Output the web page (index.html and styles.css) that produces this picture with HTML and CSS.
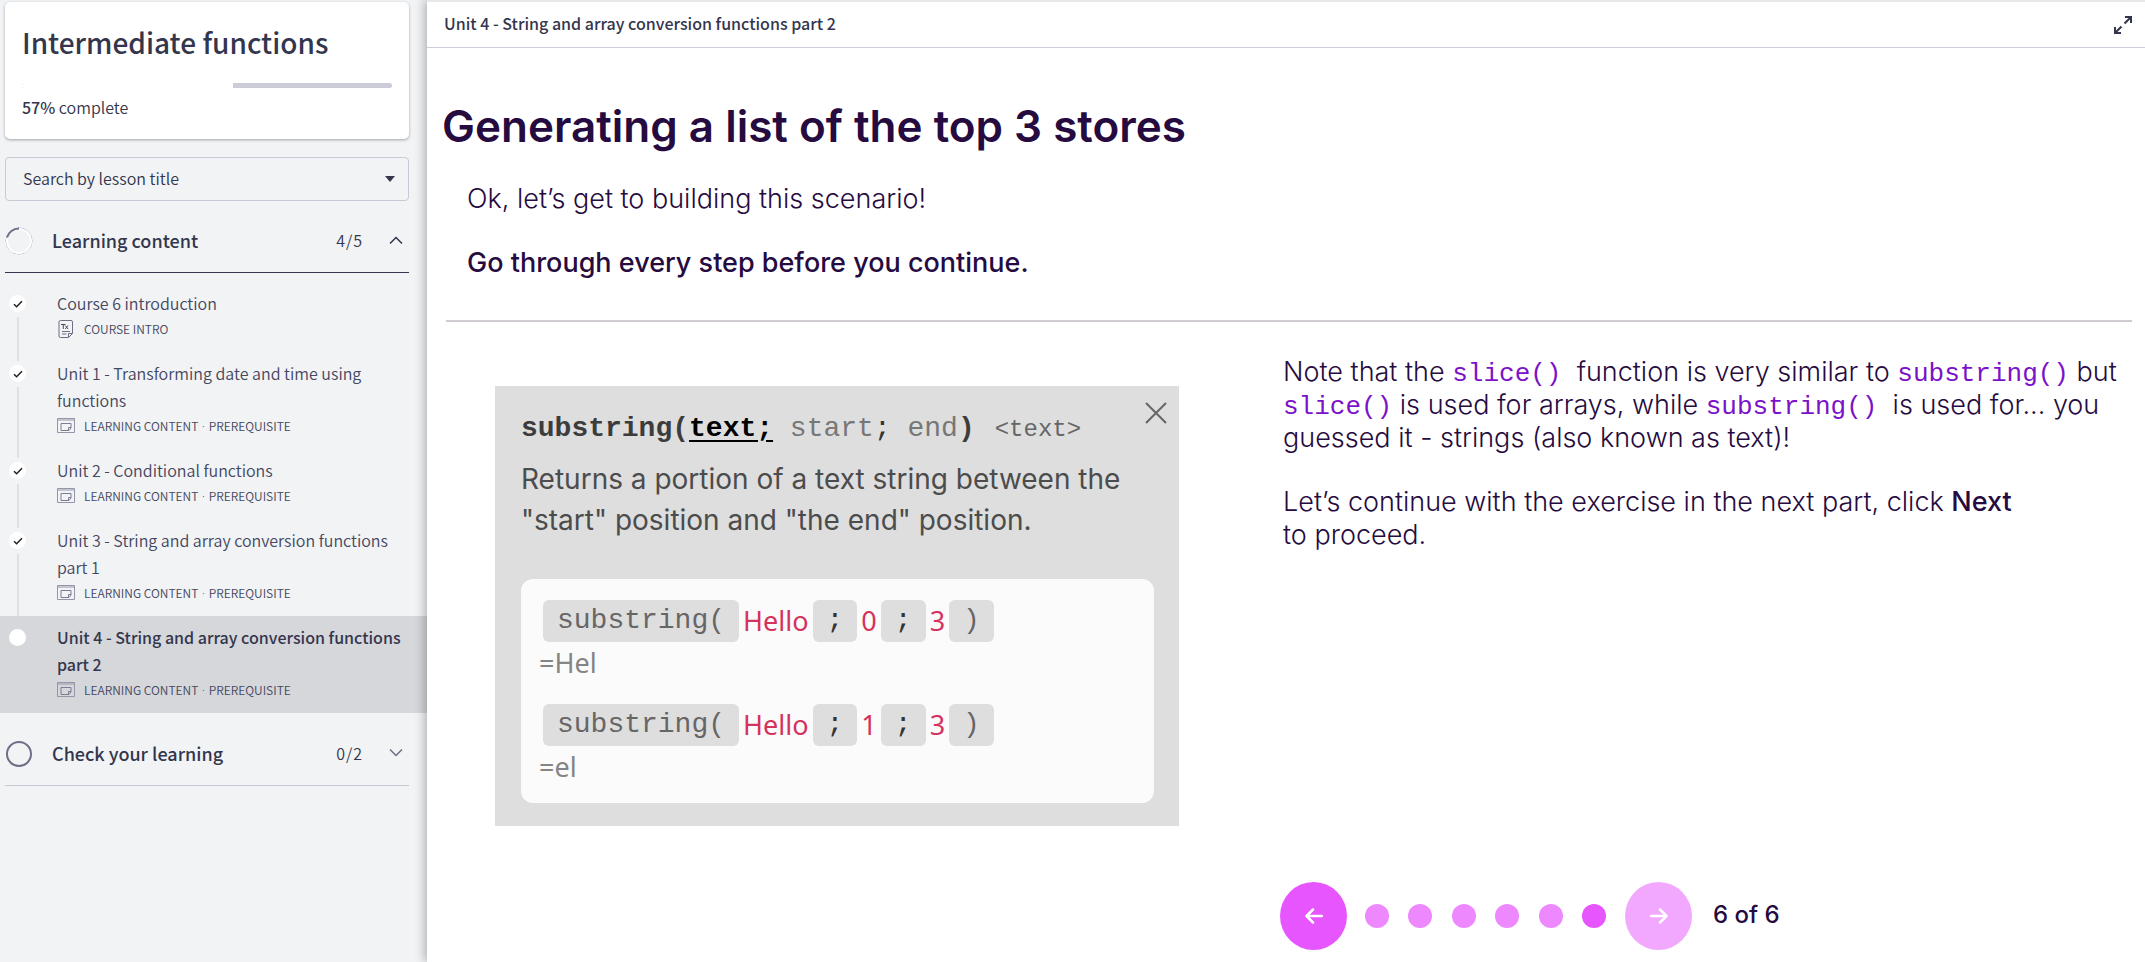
FILE: index.html
```html
<!DOCTYPE html>
<html lang="en">
<head>
<meta charset="utf-8">
<title>Intermediate functions</title>
<link rel="stylesheet" href="styles.css">
</head>
<body>
<svg class="defs" aria-hidden="true">
  <symbol id="check" viewBox="0 0 10 10"><path d="M1 5.2 3.6 7.8 9 2.2" fill="none" stroke="#222" stroke-width="1.5"/></symbol>
  <symbol id="doc" viewBox="0 0 18 18"><path d="M3.500.5h10.500a1.500 1.500 0 0 1 1.500 1.500V13.500l-4 4h-8A1.500 1.500 0 0 1 2 16V2A1.500 1.500 0 0 1 3.500.5zM15.500 13.500h-4v4M5 11.500h8M5 14h4.500" fill="none" stroke="#6c6f86" stroke-width="1"/><path d="M4 4.500h4.500M6.300 4.500v4.500M8.300 5.500l2.700 3.500m0-3.500-2.700 3.500" fill="none" stroke="#4b4d64" stroke-width="1"/></symbol>
  <symbol id="content" viewBox="0 0 18 18"><path d="M.5 1.500h17v14H.5zM.5 3h17" fill="none" stroke="#9395a8" stroke-width="1"/><path d="M4 6.500h10v4.500L12 13.500H4zM14 10.500h-2.500v3" fill="none" stroke="#7b7d92" stroke-width="1"/></symbol>
</svg>
<div class="app">
  <aside class="sidebar">
    <section class="card">
      <h1 class="card-title">Intermediate functions</h1>
      <div class="bar" role="progressbar" aria-label="Course progress" aria-valuenow="57" aria-valuemin="0" aria-valuemax="100"><div class="bar-fill" style="width:57%"></div></div>
      <p class="card-status"><b>57%</b> complete</p>
    </section>
    <div class="search">
      <select class="search-select" aria-label="Search by lesson title"><option>Search by lesson title</option></select>
      <svg class="search-arrow" width="10" height="6" viewBox="0 0 10 6"><path d="M0 0h10L5 6z" fill="#33364d"/></svg>
    </div>
    <button class="section open" type="button" aria-expanded="true">
      <svg width="28" height="28" viewBox="0 0 28 28" fill="none"><circle cx="14" cy="14" r="13" stroke="#a9abb9" stroke-width="1"/><circle cx="14" cy="14" r="12" stroke="#fff" stroke-width="2"/><path d="M2 10.500A12.500 12.500 0 0 1 14 1.500" stroke="#6c6f86" stroke-width="2"/></svg>
      <span class="section-name">Learning content</span>
      <span class="section-count">4/5</span>
      <svg width="14" height="8" viewBox="0 0 14 8"><path d="M1 7.500 7 1.500l6 6" fill="none" stroke="#33364d" stroke-width="1.500"/></svg>
    </button>
    <ol class="lessons">
      <li class="lesson"><span class="mark"><svg width="10" height="10"><use href="#check"/></svg></span><a class="lesson-link" href="#intro"><span class="lesson-title">Course 6 introduction</span><span class="meta"><svg width="18" height="18"><use href="#doc"/></svg><span>COURSE INTRO</span></span></a></li>
      <li class="lesson"><span class="mark"><svg width="10" height="10"><use href="#check"/></svg></span><a class="lesson-link" href="#unit1"><span class="lesson-title">Unit 1 - Transforming date and time using functions</span><span class="meta"><svg width="18" height="18"><use href="#content"/></svg><span>LEARNING CONTENT <span class="bullet">·</span> PREREQUISITE</span></span></a></li>
      <li class="lesson"><span class="mark"><svg width="10" height="10"><use href="#check"/></svg></span><a class="lesson-link" href="#unit2"><span class="lesson-title">Unit 2 - Conditional functions</span><span class="meta"><svg width="18" height="18"><use href="#content"/></svg><span>LEARNING CONTENT <span class="bullet">·</span> PREREQUISITE</span></span></a></li>
      <li class="lesson"><span class="mark"><svg width="10" height="10"><use href="#check"/></svg></span><a class="lesson-link" href="#unit3"><span class="lesson-title">Unit 3 - String and array conversion functions part 1</span><span class="meta"><svg width="18" height="18"><use href="#content"/></svg><span>LEARNING CONTENT <span class="bullet">·</span> PREREQUISITE</span></span></a></li>
      <li class="lesson current"><span class="mark"></span><a class="lesson-link" href="#unit4" aria-current="page"><span class="lesson-title">Unit 4 - String and array conversion functions part 2</span><span class="meta"><svg width="18" height="18"><use href="#content"/></svg><span>LEARNING CONTENT <span class="bullet">·</span> PREREQUISITE</span></span></a></li>
    </ol>
    <button class="section" type="button" aria-expanded="false">
      <svg width="28" height="28" viewBox="0 0 28 28"><circle cx="14" cy="14" r="12" fill="none" stroke="#6c6f86" stroke-width="2"/></svg>
      <span class="section-name">Check your learning</span>
      <span class="section-count">0/2</span>
      <svg width="14" height="8" viewBox="0 0 14 8"><path d="M1 .5l6 6 6-6" fill="none" stroke="#6c6f86" stroke-width="1.500"/></svg>
    </button>
  </aside>
  <main class="main">
    <header class="topbar">
      <span class="topbar-title">Unit 4 - String and array conversion functions part 2</span>
      <button class="icon-button" type="button" aria-label="Expand"><svg width="18" height="18" viewBox="0 0 18 18" fill="none" stroke="#33364d" stroke-width="2"><path d="M10.500 7.500 16.500 1.500M11 1h6v6M7.500 10.500l-6 6M1 11v6h6"/></svg></button>
    </header>
    <article class="slide">
      <h2 class="slide-title">Generating a list of the top 3 stores</h2>
      <div class="intro"><p>Ok, let’s get to building this scenario!</p><p><b>Go through every step before you continue.</b></p></div>
      <div class="columns">
        <section class="figure">
          <div class="signature"><b>substring(<u>text;</u></b> start<i>;</i> end<b>)</b><small>&lt;text&gt;</small></div>
          <button class="close" type="button" aria-label="Close"><svg width="22" height="22" viewBox="0 0 22 22"><path d="M1 1l20 20M21 1 1 21" stroke="#666" stroke-width="2"/></svg></button>
          <p class="description">Returns a portion of a text string between the "start" position and "the end" position.</p>
          <div class="examples">
            <div class="example"><div class="call"><code>substring(</code><span class="value">Hello</span><code class="sep">;</code><span class="value">0</span><code class="sep">;</code><span class="value">3</span><code>)</code></div><div class="result">=Hel</div></div>
            <div class="example"><div class="call"><code>substring(</code><span class="value">Hello</span><code class="sep">;</code><span class="value">1</span><code class="sep">;</code><span class="value">3</span><code>)</code></div><div class="result">=el</div></div>
          </div>
        </section>
        <section class="notes">
          <p>Note that the <code>slice()</code>&nbsp; function is very similar to <code>substring()</code> but <code>slice()</code> is used for arrays, while <code>substring()</code>&nbsp; is used for... you guessed it - strings (also known as text)!</p>
          <p>Let’s continue with the exercise in the next part, click <b>Next</b> <br>to proceed.</p>
          <nav class="pager" aria-label="Steps">
            <button class="step" type="button" aria-label="Previous"><svg width="18" height="16" viewBox="0 0 18 16"><path d="M17 8H2M8 1.500 1.500 8 8 14.500" /></svg></button>
            <div class="dots">
              <button class="dot" type="button" aria-label="Step 1"></button><button class="dot" type="button" aria-label="Step 2"></button><button class="dot" type="button" aria-label="Step 3"></button><button class="dot" type="button" aria-label="Step 4"></button><button class="dot" type="button" aria-label="Step 5"></button><button class="dot active" type="button" aria-label="Step 6"></button>
            </div>
            <button class="step next" type="button" aria-label="Next"><svg width="18" height="16" viewBox="0 0 18 16"><path d="M1 8h15M10 1.500 16.500 8 10 14.500"/></svg></button>
            <span class="page">6 of 6</span>
          </nav>
        </section>
      </div>
    </article>
  </main>
</div>
</body>
</html>
```
FILE: styles.css
```css
* { box-sizing: border-box; }
body { margin: 0; background: #f1f3f5; color: #33364d; font-family: "Noto Sans CJK SC", "Noto Sans", sans-serif; }
p, h1, h2, ol { margin: 0; padding: 0; }
button { border: 0; padding: 0; background: none; color: inherit; font: inherit; }
svg { display: block; flex: none; }
.defs { position: absolute; width: 0; height: 0; }
.app { display: grid; grid-template-columns: 427px 1fr; min-height: 100vh; }

.sidebar { padding-top: 2px; }
.card { margin: 0 18px 0 5px; padding: 18px 17px 19px; background: #fff; border-radius: 5px; box-shadow: 0 1px 3px rgba(40, 42, 60, .4); }
.card-title { font-size: 28px; line-height: 44px; font-weight: 500; }
.bar { height: 5px; margin-top: 19px; background: #cbccd8; border-radius: 3px; overflow: hidden; }
.bar-fill { height: 100%; background: #fff; }
.card-status { margin-top: 6px; font-size: 16px; line-height: 26px; font-weight: 350; }
.card-status b { font-weight: 500; }
.search { position: relative; margin: 18px 18px 0 5px; }
.search-select { display: block; width: 100%; height: 44px; padding: 0 17px 3px; appearance: none; background: transparent; border: 1px solid #c7c9d6; border-radius: 4px; color: inherit; font: inherit; font-size: 16px; font-weight: 350; }
.search-arrow { position: absolute; right: 14px; top: 19px; }
.section { display: flex; align-items: center; width: 404px; height: 72px; margin-left: 5px; border-bottom: 1px solid #c7c9d6; text-align: left; }
.section.open { border-color: #33364d; padding-top: 8px; }
.section-name { flex: 1; margin: 0 0 2px 19px; font-size: 18px; font-weight: 500; }
.section-count { margin: 0 26px 2px 0; font-size: 16px; font-weight: 350; letter-spacing: 1px; }
.section > svg:last-child { margin: 0 6px 2px 0; }

.lessons { padding-top: 9px; list-style: none; }
.lesson { position: relative; display: flex; padding: 8px 18px 11px 9px; }
.lesson:not(:last-child)::after { content: ""; position: absolute; left: 17px; top: 35px; bottom: -9px; width: 2px; background: #dfe0e4; }
.mark { display: grid; place-items: center; flex: none; width: 17px; height: 17px; margin-top: 5px; background: #fff; border-radius: 50%; }
.lesson-link { flex: 1; margin-left: 31px; color: #45475f; text-decoration: none; }
.lesson-title { display: block; font-size: 16px; line-height: 27px; font-weight: 350; }
.meta { display: flex; align-items: center; gap: 9px; height: 24px; font-size: 12px; line-height: 24px; font-weight: 350; }
.bullet { margin: 0 1px; font-family: "Noto Sans", sans-serif; line-height: 1; }
.current { background: #d6d7db; }
.current .lesson-title { color: #33364d; font-weight: 500; }
.lessons + .section { height: 73px; padding-top: 10px; }

.main { position: relative; display: flex; flex-direction: column; background: #fff; border-top: 2px solid #e8e8e8; box-shadow: -2px 0 10px rgba(0, 0, 0, .3); }
.topbar { display: flex; align-items: center; justify-content: space-between; height: 46px; padding: 0 13px 0 17px; border-bottom: 1px solid #cfcddc; font-size: 16px; font-weight: 500; }
.topbar-title { margin-bottom: 3px; }
.slide { flex: 1; display: flex; flex-direction: column; padding: 48px 13px 12px 19px; color: #260b40; font-family: Inter, sans-serif; font-size: 27px; line-height: 32px; font-weight: 300; }
.slide b { font-weight: 500; }
.slide-title { margin-left: -4px; font-size: 44px; line-height: 60px; font-weight: 600; }
.intro { padding: 27px 21px 41px; border-bottom: 2px solid #cfcbd0; }
.intro p + p { margin-top: 32px; }
.columns { flex: 1; display: grid; grid-template-columns: 837fr 849fr; }
.figure { position: relative; align-self: start; margin: 64px 104px 0 49px; padding: 25px 25px 23px 26px; background: #dedede; color: #4c4c4c; }
.signature { color: #777; font: 28px/36px "Liberation Mono", monospace; white-space: pre; }
.signature b { color: #3c3c3c; font-weight: 700; }
.signature u { color: #000; text-underline-offset: 4px; }
.signature i { color: #333; font-style: normal; }
.signature small { margin-left: 20px; font-size: 24px; color: #666; }
.close { position: absolute; right: 12px; top: 16px; }
.description { margin-top: 11px; font-size: 28px; line-height: 41px; font-weight: 400; }
.examples { margin-top: 38px; padding: 21px 18px 15px; background: #fbfbfb; border-radius: 12px; }
.example + .example { margin-top: 20px; }
.call { display: flex; align-items: center; gap: 4px; padding-left: 4px; font-family: "Noto Sans", sans-serif; font-size: 27px; font-weight: 400; }
.call code { padding: 0 14px; background: #dedede; border-radius: 6px; color: #666; font: 28px/42px "Liberation Mono", monospace; }
.call .sep { color: #333; }
.value { color: #d3335c; line-height: 40px; }
.result { color: #858585; font-family: "Noto Sans", sans-serif; font-size: 27px; line-height: 42px; font-weight: 400; }

.notes { display: flex; flex-direction: column; padding-top: 33px; }
.notes p { line-height: 33px; }
.notes p + p { margin-top: 31px; }
.notes p code { color: #7b12c9; font: 26px/1 "Liberation Mono", monospace; }
.pager { display: flex; align-items: center; margin: auto 0 0 -3px; }
.step { display: grid; place-items: center; width: 67px; height: 68px; border-radius: 50%; background: #e755ff; }
.next { background: #f2a8ff; }
.step path { fill: none; stroke: #fff; stroke-width: 2.500; stroke-linecap: round; stroke-linejoin: round; }
.dots { display: flex; justify-content: space-between; width: 241px; margin: 0 19px 0 18px; }
.dot { width: 24px; height: 24px; border-radius: 50%; background: #ee88ff; }
.dot.active { background: #e755ff; }
.page { margin: 0 0 3px 21px; font-size: 24px; font-weight: 500; }
```
